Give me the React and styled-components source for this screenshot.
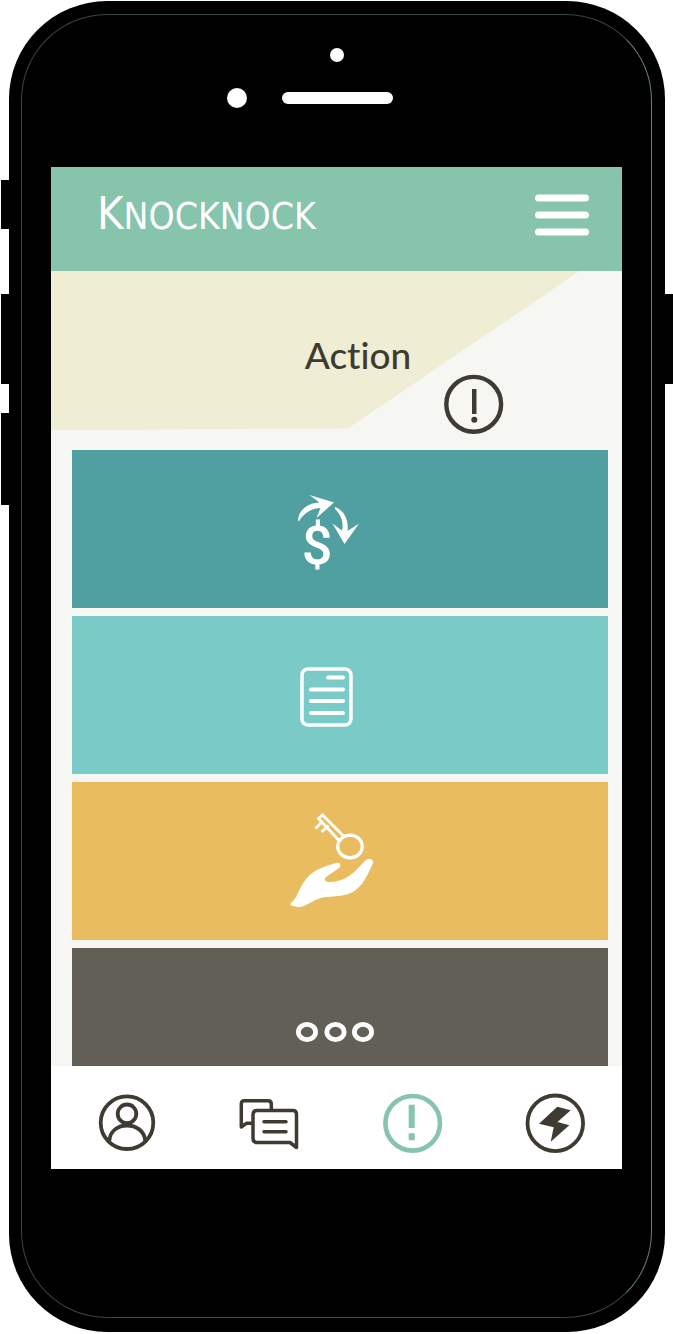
import React from "react";
import styled, { createGlobalStyle } from "styled-components";

const color = {
  ink: "#3f3b32",
  mint: "#86c4ac",
  cream: "#efedd4",
  paper: "#f6f7f3",
  teal: "#50a0a2",
  aqua: "#7acbc7",
  gold: "#e9bd5f",
  stone: "#625f57",
};

const GlobalStyle = createGlobalStyle`
  *, *::before, *::after { box-sizing: border-box; }
  body { margin: 0; background: #fff; font-family: Lato, "Liberation Sans", sans-serif; }
  button { border: 0; padding: 0; background: none; color: inherit; font: inherit; cursor: pointer; }
  svg { display: block; overflow: visible; }
`;

const Page = styled.div`
  max-width: 673px;
  margin: 0 auto;
  padding: 1px 8px 2px 9px;
`;

const Shell = styled.div`
  position: relative;
  padding: 13px 13px 14px 12px;
  background: #000;
  border-radius: 98px;
`;

const SideKey = styled.span`
  position: absolute;
  top: ${(p) => p.$top}px;
  ${(p) => p.$side}: -8px;
  width: 10px;
  height: ${(p) => p.$length}px;
  background: #000;
`;

const Face = styled.div`
  border: 1px solid #37474a;
  border-right-color: #66807f;
  border-radius: 86px;
  padding: 0 29px 148px;
`;

const Sensors = styled.div`
  height: 152px;
  padding-top: 33px;
  display: flex;
  flex-direction: column;
  align-items: center;
  gap: 26px;
`;

const SensorRow = styled.div`
  display: flex;
  align-items: center;
  gap: 35px;
  padding-right: 54px;
`;

const Lens = styled.span`
  width: ${(p) => p.$size}px;
  height: ${(p) => p.$size}px;
  border-radius: 50%;
  background: #fff;
`;

const Speaker = styled.span`
  width: 111px;
  height: 12px;
  border-radius: 6px;
  background: #fff;
`;

const Screen = styled.div`
  background: ${color.paper};
`;

const Header = styled.header`
  height: 104px;
  padding: 0 33px 8px 46px;
  display: flex;
  align-items: center;
  justify-content: space-between;
  background: ${color.mint};
  color: #fff;
`;

const Logo = styled.div`
  font-family: "DejaVu Sans Condensed", "DejaVu Sans", sans-serif;
  font-size: 37px;
  line-height: 64px;
  text-transform: uppercase;

  &::first-letter {
    font-size: 45px;
  }
`;

const Hero = styled.section`
  position: relative;
  height: 179px;
  padding: 0 0 16px 136px;
  display: flex;
  align-items: flex-end;
  justify-content: center;
  gap: 33px;
  color: ${color.ink};

  &::before {
    content: "";
    position: absolute;
    inset: 0;
    background: ${color.cream};
    clip-path: polygon(0 0, 92.6% 0, 52% 88%, 0 89%);
  }
`;

const Title = styled.h1`
  position: relative;
  margin: 0;
  padding-bottom: 55px;
  font-size: 37px;
  line-height: 48px;
  font-weight: 500;
  font-variant-ligatures: none;
`;

const HeroIcon = styled.svg`
  position: relative;
`;

const CardList = styled.main`
  display: flex;
  flex-direction: column;
  gap: 8px;
  padding: 0 14px 0 21px;
`;

const Card = styled.button`
  height: ${(p) => p.$height}px;
  display: flex;
  justify-content: center;
  background: ${(p) => p.$fill};
  color: #fff;
`;

const TabBar = styled.nav`
  height: 103px;
  padding: 27px 36px 16px 47px;
  display: flex;
  justify-content: space-between;
  background: #fff;
`;

const Tab = styled.button`
  width: 60px;
  height: 60px;
  color: ${(p) => (p.$active ? color.mint : color.ink)};
`;

const line = {
  fill: "none",
  stroke: "currentColor",
  strokeLinecap: "round",
  strokeLinejoin: "round",
};

function CardIcon({ height = 158, children }) {
  return (
    <svg width="120" height={height} viewBox={`0 0 120 ${height}`} fill="currentColor" aria-hidden="true">
      {children}
    </svg>
  );
}

function PaymentIcon() {
  return (
    <CardIcon>
      <g transform="translate(0 30)">
        <path d="M18 41C18 31 27 23 39.500 22.500L29.500 15L54 22.500L36.500 38L40.500 28C32 28 24 33 19.500 40.500Z" />
        <path d="M55 27C64 30 69 40 67.500 51L79 43.500L64.500 64L52.500 43.500L62 50.500C64 42 61 35 55 29Z" />
        <text x="37" y="84" textAnchor="middle" fontFamily="Roboto, sans-serif" fontWeight="500" fontSize="54">
          $
        </text>
      </g>
    </CardIcon>
  );
}

function DocumentIcon() {
  return (
    <CardIcon>
      <g {...line} strokeWidth="3.500" transform="translate(0 34)">
        <rect x="22" y="19" width="49" height="56" rx="6" />
        <path strokeWidth="4" d="M48 27.500H63M31 39.500H63M31 51H63M31 63H63" />
      </g>
    </CardIcon>
  );
}

function KeyIcon() {
  return (
    <CardIcon>
      <g transform="translate(-10 18)">
        <path d="M20 104C28 98 29 87 36 79C44 69 56 66 66 63C70 61.500 72 65 69 68L56 77C53 80 56 82 60 82C72 82 82 75 88 68L95 61C98 57.500 104 59 103 63C99 72 95 82 87 89C80 96 68 96 56 97C46 98 40 104 31 107C27 107 22 107 20 104Z" />
        <g {...line} strokeWidth="2.800" strokeLinecap="butt" strokeLinejoin="miter">
          <ellipse cx="80" cy="46.500" rx="12.300" ry="11.300" strokeWidth="3.200" />
          <path d="M74 36.500L52.500 15L48.500 18.500L69 40.500M52 22L45.500 28.500M58.500 25.500L51.500 32" />
        </g>
      </g>
    </CardIcon>
  );
}

function MoreIcon() {
  return (
    <CardIcon height={118}>
      <g {...line} strokeWidth="4.800">
        <ellipse cx="27" cy="84" rx="8.600" ry="7.600" />
        <ellipse cx="55.500" cy="84" rx="8.600" ry="7.600" />
        <ellipse cx="83" cy="84" rx="8.600" ry="7.600" />
      </g>
    </CardIcon>
  );
}

function TabIcon({ children }) {
  return (
    <svg width="60" height="60" viewBox="0 0 60 60" aria-hidden="true">
      {children}
    </svg>
  );
}

const cards = [
  { label: "Payments", fill: color.teal, height: 158, icon: <PaymentIcon /> },
  { label: "Documents", fill: color.aqua, height: 158, icon: <DocumentIcon /> },
  { label: "Keys", fill: color.gold, height: 158, icon: <KeyIcon /> },
  { label: "More", fill: color.stone, height: 118, icon: <MoreIcon /> },
];

const tabs = [
  {
    label: "Profile",
    icon: (
      <g {...line} strokeWidth="3.800">
        <circle cx="29" cy="29.700" r="26.300" />
        <circle cx="29" cy="20.800" r="9.300" />
        <path d="M11.500 47C12 38 20 32.500 29 32.500S46.500 38 47 47" />
      </g>
    ),
  },
  {
    label: "Messages",
    icon: (
      <g {...line} strokeWidth="3.500">
        <path d="M16 17.500H52Q55.500 17.500 55.500 21.500V54.500L49 49.500H16Q12 49.500 12 45V22Q12 17.500 16 17.500Z" />
        <path d="M30.300 17V11Q30.300 7.700 27 7.700H3.500Q.3 7.700 .3 11V34L5.300 30.300H11" />
        <path d="M23 28.700H45M23 38.700H45" />
      </g>
    ),
  },
  {
    label: "Action",
    active: true,
    icon: (
      <g>
        <circle {...line} strokeWidth="4.600" cx="29.700" cy="30.300" r="27.300" />
        <path fill="currentColor" d="M25.700 11.700H31.700V35H25.700ZM25.700 40.300H31.700V47.300H25.700Z" />
      </g>
    ),
  },
  {
    label: "Quick actions",
    icon: (
      <g>
        <circle {...line} strokeWidth="3.800" cx="29.300" cy="30.300" r="27.800" />
        <path
          fill="currentColor"
          d="M31.300 13.700L44.700 17.300L31.500 29L43.300 32.300L24.700 48.700L27.700 34.300L13 30.700Z"
        />
      </g>
    ),
  },
];

export default function App() {
  return (
    <Page>
      <GlobalStyle />
      <Shell>
        <SideKey $side="left" $top={179} $length={49} />
        <SideKey $side="left" $top={293} $length={90} />
        <SideKey $side="left" $top={412} $length={92} />
        <SideKey $side="right" $top={293} $length={90} />
        <Face>
          <Sensors>
            <Lens $size={14} />
            <SensorRow>
              <Lens $size={20} />
              <Speaker />
            </SensorRow>
          </Sensors>
          <Screen>
            <Header>
              <Logo>Knocknock</Logo>
              <button type="button" aria-label="Menu">
                <svg width="54" height="42" viewBox="0 0 54 42" aria-hidden="true">
                  <path {...line} strokeWidth="7" d="M3.500 4H50.500M3.500 21H50.500M3.500 38H50.500" />
                </svg>
              </button>
            </Header>
            <Hero>
              <Title>Action</Title>
              <HeroIcon width="60" height="60" viewBox="0 0 60 60" aria-hidden="true">
                <circle {...line} strokeWidth="4.400" cx="29.700" cy="30.300" r="27.400" />
                <path fill="currentColor" d="M28 15H32.500V40H28Z" />
                <circle fill="currentColor" cx="30.300" cy="45.700" r="3" />
              </HeroIcon>
            </Hero>
            <CardList>
              {cards.map((c) => (
                <Card key={c.label} type="button" aria-label={c.label} $fill={c.fill} $height={c.height}>
                  {c.icon}
                </Card>
              ))}
            </CardList>
            <TabBar>
              {tabs.map((t) => (
                <Tab key={t.label} type="button" aria-label={t.label} $active={t.active}>
                  <TabIcon>{t.icon}</TabIcon>
                </Tab>
              ))}
            </TabBar>
          </Screen>
        </Face>
      </Shell>
    </Page>
  );
}
